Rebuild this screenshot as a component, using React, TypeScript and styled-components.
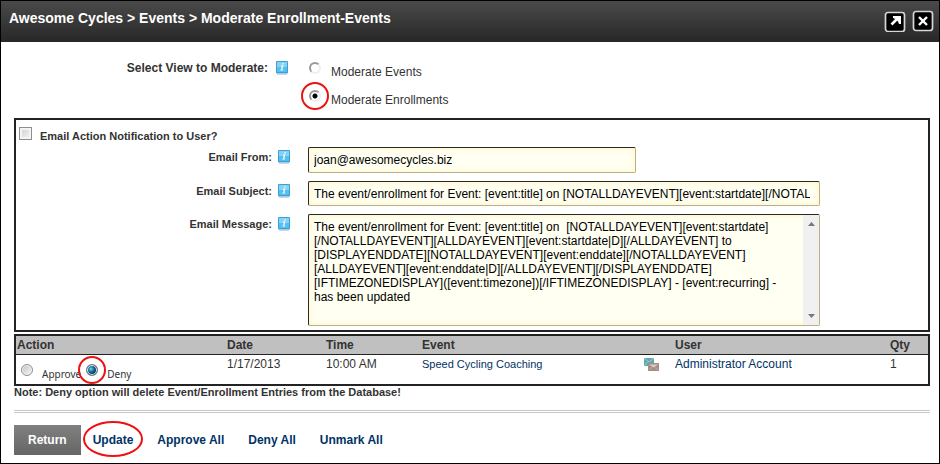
import React, { useId, useState } from "react";
import styled, { createGlobalStyle, css } from "styled-components";

const GlobalStyle = createGlobalStyle`
  *, *::before, *::after { box-sizing: border-box; }
  body {
    margin: 0;
    background: #fff;
    color: #333;
    font: 12px/16px "Liberation Sans", Arial, sans-serif;
  }
`;

const ink = "#232323";
const link = "#003366";
const callout = "#ee1111";

const Window = styled.main`
  min-height: 100vh;
  border: 1px solid #000;
`;

const TitleBar = styled.header`
  display: flex;
  justify-content: space-between;
  height: 41px;
  padding: 0 5px 0 8px;
  background: linear-gradient(#4a4a4a, #272727);
`;

const Title = styled.h1`
  margin: 0;
  padding-top: 7px;
  color: #fff;
  font-size: 14px;
  line-height: 20px;
`;

const WindowButtons = styled.div`
  display: flex;
  gap: 6px;
  padding-top: 9px;
`;

const IconButton = styled.button`
  display: flex;
  width: 22px;
  height: 22px;
  padding: 0;
  border: 0;
  background: none;
`;

const Content = styled.form`
  padding: 16px 9px 0 13px;
`;

const LabelCell = styled.div<{ $gap: number }>`
  display: flex;
  justify-content: flex-end;
  align-items: flex-start;
  gap: ${(p) => p.$gap}px;
`;

const ViewPicker = styled.div`
  display: grid;
  grid-template-columns: 275px 1fr;
  column-gap: 20px;
  margin-bottom: 12px;
`;

const ViewLabel = styled.span`
  font-weight: bold;
  line-height: 20px;
`;

const HelpButton = styled.button`
  display: flex;
  width: 14px;
  height: 16px;
  margin-top: 2px;
  padding: 0;
  border: 0;
  background: none;
`;

const ViewOptions = styled.div`
  display: flex;
  flex-direction: column;
  gap: 12px;
  padding-top: 4px;
`;

const Option = styled.div<{ $small?: boolean }>`
  display: flex;
  align-items: flex-start;
  height: 16px;
  gap: ${(p) => (p.$small ? 9 : 10)}px;
  label {
    padding-top: ${(p) => (p.$small ? 3 : 2)}px;
    ${(p) => p.$small && css`font: 10px/14px "Noto Sans", sans-serif;`}
  }
`;

const Marked = styled.span<{ $on?: boolean }>`
  position: relative;
  display: flex;
  ${(p) =>
    p.$on &&
    css`
      &::after {
        content: "";
        position: absolute;
        inset: -8px;
        border: 2px solid ${callout};
        border-radius: 50%;
        pointer-events: none;
      }
    `}
`;

const ClassicRadio = styled.input`
  appearance: none;
  width: 12px;
  height: 12px;
  margin: 0;
  border: 2px solid;
  border-color: #999 #eee #eee #999;
  border-radius: 50%;
  background: #fff;
  &:checked {
    background: radial-gradient(circle, #000 0 2px, #fff 3px);
  }
`;

const GlossyRadio = styled.input`
  appearance: none;
  width: 12px;
  height: 12px;
  margin: 0;
  border: 1px solid #8a8f94;
  border-radius: 50%;
  background: linear-gradient(135deg, #bfc4c8, #f6f6f6);
  box-shadow: inset 0 0 0 1px #f4f4f4;
  &:checked {
    border-color: #6d7780;
    background: radial-gradient(circle at 4px 4px, #8fe0fa 0, #2387b8 2px, #0b3655 5px);
    box-shadow: inset 0 0 0 1px #eef2f4;
  }
`;

const Panel = styled.section`
  padding: 6px 4px 4px 3px;
  border: 2px solid ${ink};
`;

const NotifyRow = styled.div`
  display: flex;
  gap: 8px;
  height: 21px;
  font-size: 11px;
  font-weight: bold;
  label { padding-top: 2px; }
`;

const CheckBox = styled.input`
  appearance: none;
  width: 13px;
  height: 13px;
  margin: 1px 0 0;
  border: 1px solid #8e8f8f;
  background: linear-gradient(135deg, #cbcfd5, #f6f6f6);
  box-shadow: inset 0 0 0 2px #f4f4f4;
  &:checked { background: #2387b8; }
`;

const Fields = styled.div`
  display: grid;
  grid-template-columns: 272px minmax(0, 512px);
  column-gap: 17px;
  row-gap: 8px;
`;

const FieldLabel = styled.label`
  font-size: 11px;
  font-weight: bold;
  line-height: 20px;
`;

const field = css`
  border: 1px solid;
  border-color: #2a2a22 #b9b085 #b9b085 #2a2a22;
  border-radius: 2px;
  background: #fffff2;
  box-shadow: inset 0 0 6px #fff2c4;
`;

const textStyle = css`
  color: #000;
  font: 12px/14px "Liberation Sans", Arial, sans-serif;
`;

const TextInput = styled.input<{ $short?: boolean }>`
  ${field}
  ${textStyle}
  width: ${(p) => (p.$short ? "64%" : "100%")};
  height: ${(p) => (p.$short ? 26 : 25)}px;
  padding: 0 9px 0 5px;
`;

const MessageBox = styled.div`
  ${field}
  display: flex;
  height: 112px;
`;

const Message = styled.textarea`
  ${textStyle}
  flex: 1;
  min-width: 0;
  padding: 5px;
  border: 0;
  outline: 0;
  resize: none;
  overflow: hidden;
  background: none;
`;

const ScrollTrack = styled.div`
  display: flex;
  flex-direction: column;
  justify-content: space-between;
  align-items: center;
  width: 16px;
  padding: 7px 0;
  background: #f0f0f0;
`;

const Entries = styled.table`
  width: 100%;
  margin-top: 2px;
  border: 2px solid ${ink};
  border-spacing: 0;
  table-layout: fixed;
  th, td {
    padding: 0 0 0 1px;
    text-align: left;
    vertical-align: top;
  }
  th {
    height: 19px;
    border-bottom: 1px solid ${ink};
    background: #c0c0c0;
    line-height: 18px;
  }
  td { height: 29px; padding-top: 1px; }
`;

const Col = styled.col<{ $w?: number }>`
  width: ${(p) => (p.$w ? `${p.$w}px` : "auto")};
`;

const Link = styled.a<{ $small?: boolean }>`
  color: ${link};
  font-size: ${(p) => (p.$small ? 11 : 12)}px;
  text-decoration: none;
`;

const ActionChoices = styled.div`
  display: flex;
  gap: 5px;
  padding: 8px 0 0 4px;
`;

const MailIcon = styled.svg`
  display: block;
  margin-top: 2px;
`;

const Note = styled.p`
  margin: 0;
  font-size: 11px;
  font-weight: bold;
  line-height: 12px;
`;

const Divider = styled.hr`
  height: 3px;
  margin: 12px 0;
  border: solid #c8c8c8;
  border-width: 1px 0;
`;

const Actions = styled.nav`
  display: flex;
  gap: 24px;
`;

const ReturnButton = styled.button`
  height: 30px;
  margin-right: -12px;
  padding: 0 14px;
  border: 0;
  background: linear-gradient(#808080, #666);
  color: #fff;
  font: bold 12px/30px "Liberation Sans", Arial, sans-serif;
`;

const ActionButton = styled.button<{ $marked?: boolean }>`
  position: relative;
  padding: 0;
  border: 0;
  background: none;
  color: ${link};
  font: bold 12px/30px "Liberation Sans", Arial, sans-serif;
  ${(p) =>
    p.$marked &&
    css`
      &::after {
        content: "";
        position: absolute;
        inset: -4px -10px -2px;
        border: 2px solid ${callout};
        border-radius: 50%;
      }
    `}
`;

const columns = [
  { name: "Action", width: 210 },
  { name: "Date", width: 99 },
  { name: "Time", width: 96 },
  { name: "Event", width: 222 },
  { name: "", width: 31 },
  { name: "User" },
  { name: "Qty", width: 39 },
];

const messageText =
  "The event/enrollment for Event: [event:title] on  [NOTALLDAYEVENT][event:startdate][/NOTALLDAYEVENT][ALLDAYEVENT][event:startdate|D][/ALLDAYEVENT] to [DISPLAYENDDATE][NOTALLDAYEVENT][event:enddate][/NOTALLDAYEVENT][ALLDAYEVENT][event:enddate|D][/ALLDAYEVENT][/DISPLAYENDDATE][IFTIMEZONEDISPLAY]([event:timezone])[/IFTIMEZONEDISPLAY] - [event:recurring] - has been updated";

function Help({ topic }: { topic: string }) {
  return (
    <HelpButton type="button" aria-label={`Help: ${topic}`}>
      <svg width="14" height="16" viewBox="0 0 14 16">
        <path d="M2 14.5h10" stroke="#d4d4d4" />
        <rect x="1" y="1" width="12" height="12.5" rx="1" fill="#3ba0d8" />
        <path d="M2 2h10v5.5H2z" fill="#85d2f3" />
        <path d="M2 7h10v5H2z" fill="#55bfef" />
        <path d="M7.4 3.2h1.6l-.3 1.3H7.1zM5.8 5.6h2.6L7.3 9.8h1l-.2.8H5.2l.2-.8h.6l.8-3.4h-1z" fill="#f4fcff" />
      </svg>
    </HelpButton>
  );
}

function Arrow({ down }: { down?: boolean }) {
  return (
    <svg width="7" height="4" viewBox="0 0 7 4" aria-hidden="true">
      <path d={down ? "M0 0h7L3.5 4z" : "M0 4h7L3.5 0z"} fill="#777" />
    </svg>
  );
}

export default function App() {
  const id = useId();
  const [view, setView] = useState("enrollments");
  const [decision, setDecision] = useState("deny");
  return (
    <Window>
      <GlobalStyle />
      <TitleBar>
        <Title>Awesome Cycles &gt; Events &gt; Moderate Enrollment-Events</Title>
        <WindowButtons>
          <IconButton type="button" aria-label="Maximize">
            <svg width="22" height="22" viewBox="0 0 22 22">
              <rect x="1.5" y="2.5" width="19" height="19" rx="2.5" fill="#000" stroke="#d6d6d6" strokeWidth="1.7" />
              <path d="M7.5 14.5 13 9" stroke="#fff" strokeWidth="2.6" />
              <path d="M9 6h8v8h-2l-1-2.500L11.500 9 9 8z" fill="#fff" />
            </svg>
          </IconButton>
          <IconButton type="button" aria-label="Close">
            <svg width="22" height="22" viewBox="0 0 22 22">
              <rect x="1.5" y="1.5" width="19" height="19" rx="2.5" fill="#000" stroke="#d6d6d6" strokeWidth="1.7" />
              <path d="m7 7 8 8m0-8-8 8" stroke="#fff" strokeWidth="2.4" />
            </svg>
          </IconButton>
        </WindowButtons>
      </TitleBar>

      <Content onSubmit={(e) => e.preventDefault()}>
        <ViewPicker role="radiogroup" aria-labelledby={`${id}view`}>
          <LabelCell $gap={7}>
            <ViewLabel id={`${id}view`}>Select View to Moderate:</ViewLabel>
            <Help topic="view" />
          </LabelCell>
          <ViewOptions>
            {[
              ["events", "Moderate Events"],
              ["enrollments", "Moderate Enrollments"],
            ].map(([value, text]) => (
              <Option key={value}>
                <Marked $on={value === "enrollments"}>
                  <ClassicRadio
                    type="radio"
                    name="view"
                    id={id + value}
                    checked={view === value}
                    onChange={() => setView(value)}
                  />
                </Marked>
                <label htmlFor={id + value}>{text}</label>
              </Option>
            ))}
          </ViewOptions>
        </ViewPicker>

        <Panel>
          <NotifyRow>
            <CheckBox type="checkbox" id={`${id}notify`} />
            <label htmlFor={`${id}notify`}>Email Action Notification to User?</label>
          </NotifyRow>
          <Fields>
            <LabelCell $gap={5}>
              <FieldLabel htmlFor={`${id}from`}>Email From:</FieldLabel>
              <Help topic="email from" />
            </LabelCell>
            <TextInput $short id={`${id}from`} defaultValue="joan@awesomecycles.biz" />
            <LabelCell $gap={5}>
              <FieldLabel htmlFor={`${id}subject`}>Email Subject:</FieldLabel>
              <Help topic="email subject" />
            </LabelCell>
            <TextInput
              id={`${id}subject`}
              defaultValue="The event/enrollment for Event: [event:title] on [NOTALLDAYEVENT][event:startdate][/NOTALLDAYEVENT]"
            />
            <LabelCell $gap={5}>
              <FieldLabel htmlFor={`${id}message`}>Email Message:</FieldLabel>
              <Help topic="email message" />
            </LabelCell>
            <MessageBox>
              <Message id={`${id}message`} spellCheck={false} defaultValue={messageText} />
              <ScrollTrack>
                <Arrow />
                <Arrow down />
              </ScrollTrack>
            </MessageBox>
          </Fields>
        </Panel>

        <Entries>
          <colgroup>
            {columns.map((c) => (
              <Col key={c.name} $w={c.width} />
            ))}
          </colgroup>
          <thead>
            <tr>
              {columns.map((c) => (
                <th key={c.name} scope="col">{c.name}</th>
              ))}
            </tr>
          </thead>
          <tbody>
            <tr>
              <td>
                <ActionChoices>
                  {[
                    ["approve", "Approve"],
                    ["deny", "Deny"],
                  ].map(([value, text]) => (
                    <Option $small key={value}>
                      <Marked $on={value === "deny"}>
                        <GlossyRadio
                          type="radio"
                          name="decision"
                          id={id + value}
                          checked={decision === value}
                          onChange={() => setDecision(value)}
                        />
                      </Marked>
                      <label htmlFor={id + value}>{text}</label>
                    </Option>
                  ))}
                </ActionChoices>
              </td>
              <td>1/17/2013</td>
              <td>10:00 AM</td>
              <td><Link $small href="#event">Speed Cycling Coaching</Link></td>
              <td>
                <MailIcon width="15" height="13" viewBox="0 0 15 13" role="img" aria-label="Email">
                  <rect width="10" height="8" fill="#5fa9ad" />
                  <path d="m0 0 5 4 5-4M0 8l3.5-4" stroke="#b9dfe0" strokeWidth=".7" fill="none" />
                  <rect x="4" y="5" width="11" height="8" fill="#a58e88" />
                  <path d="M5 6.5h9l-4.5 3z" fill="#dccbc6" />
                  <path d="m5 12 3-2.5m6 2.5-3-2.5" stroke="#cdb9b3" strokeWidth=".7" fill="none" />
                </MailIcon>
              </td>
              <td><Link href="#user">Administrator Account</Link></td>
              <td>1</td>
            </tr>
          </tbody>
        </Entries>
        <Note>Note: Deny option will delete Event/Enrollment Entries from the Database!</Note>
        <Divider />
        <Actions>
          <ReturnButton type="button">Return</ReturnButton>
          <ActionButton type="submit" $marked>Update</ActionButton>
          <ActionButton type="button">Approve All</ActionButton>
          <ActionButton type="button">Deny All</ActionButton>
          <ActionButton type="button">Unmark All</ActionButton>
        </Actions>
      </Content>
    </Window>
  );
}
